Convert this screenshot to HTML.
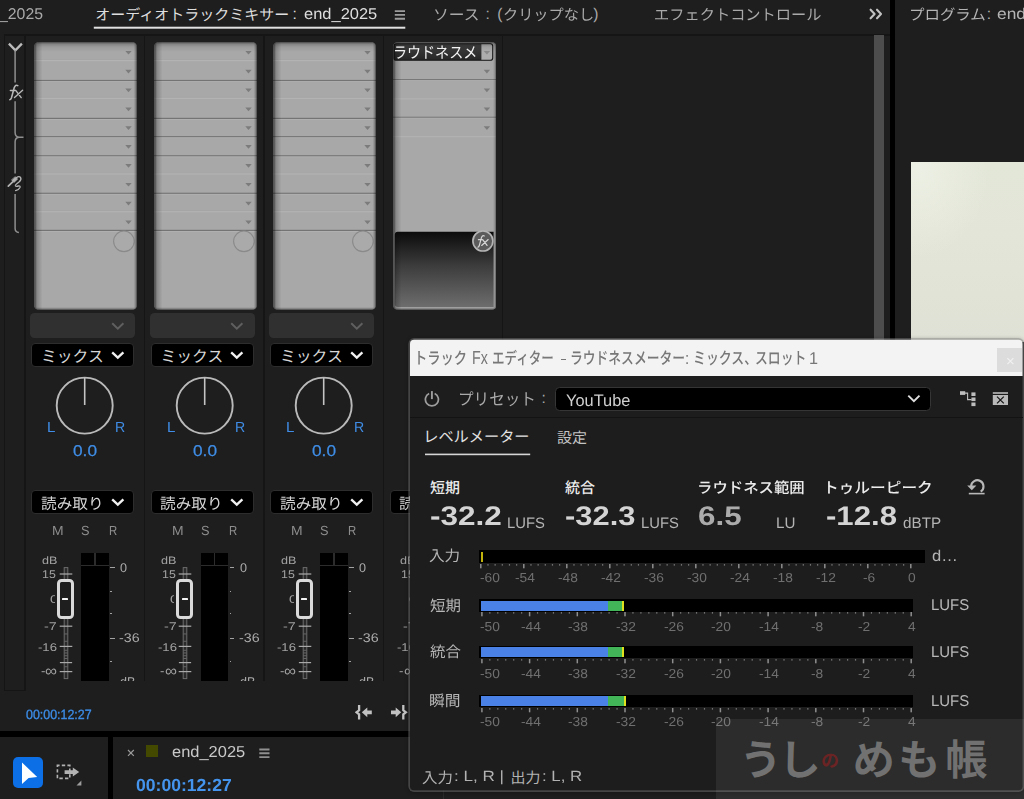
<!DOCTYPE html>
<html lang="ja"><head><meta charset="utf-8"><title>Audio Track Mixer - Loudness Meter</title>
<style>
html,body{margin:0;padding:0;overflow:hidden}
#app{position:absolute;left:0;top:0;width:1024px;height:799px;overflow:hidden}
body{width:1024px;height:799px;overflow:hidden;position:relative;background:#1e1e1e;
 font-family:"Liberation Sans","Noto Sans CJK JP",sans-serif;-webkit-font-smoothing:antialiased;text-rendering:geometricPrecision}
.a{position:absolute;box-sizing:border-box}
.t{position:absolute;white-space:nowrap;margin:0}
</style></head>
<body>
<div id="app">
<div class="t" style="left:-1.50px;top:6.99px;font-size:15.6px;line-height:15.6px;color:#a9a9a9;transform:scaleX(1.0143);transform-origin:0 0;">_2025</div>
<div class="t" style="left:95.20px;top:7.99px;font-size:15.6px;line-height:15.6px;color:#dedede;"><span style="font-size:15px">オーディオトラックミキサー</span></div>
<div class="t" style="left:292.60px;top:6.99px;font-size:15.6px;line-height:15.6px;color:#dedede;">:</div>
<div class="t" style="left:303.50px;top:6.99px;font-size:15.6px;line-height:15.6px;color:#dedede;transform:scaleX(1.0560);transform-origin:0 0;">end_2025</div>
<svg class="a" style="left:394px;top:9px;" width="12" height="12" viewBox="0 0 12 12"><path d="M0.8 2.1h10.2M0.8 5.9h10.2M0.8 9.7h10.2" stroke="#9c9c9c" stroke-width="1.9"/></svg>
<svg class="a" style="left:93px;top:26px;" width="313" height="4" viewBox="0 0 313 4"><rect x="0.8" y="0.7" width="311.5" height="2" fill="#e2e2e2"/></svg>
<div class="t" style="left:433.20px;top:7.99px;font-size:15.6px;line-height:15.6px;color:#a9a9a9;transform:scaleX(1.05);transform-origin:0 0;"><span style="font-size:15px">ソース</span></div>
<div class="t" style="left:485.40px;top:6.99px;font-size:15.6px;line-height:15.6px;color:#a9a9a9;">:</div>
<div class="t" style="left:497.20px;top:6.99px;font-size:15.6px;line-height:15.6px;color:#a9a9a9;">(</div>
<div class="t" style="left:502.80px;top:7.99px;font-size:15.6px;line-height:15.6px;color:#a9a9a9;transform:scaleX(1.012);transform-origin:0 0;"><span style="font-size:15px">クリップなし</span></div>
<div class="t" style="left:593.20px;top:6.99px;font-size:15.6px;line-height:15.6px;color:#a9a9a9;">)</div>
<div class="t" style="left:654.00px;top:7.99px;font-size:15.6px;line-height:15.6px;color:#a9a9a9;transform:scaleX(1.015);transform-origin:0 0;"><span style="font-size:15px">エフェクトコントロール</span></div>
<svg class="a" style="left:869px;top:7.7px;" width="15" height="12" viewBox="0 0 15 12"><path d="M1.6 1.7l4 4.3-4 4.3M8 1.7l4 4.3-4 4.3" fill="none" stroke="#c2c2c2" stroke-width="2.1" stroke-linecap="round" stroke-linejoin="round"/></svg>
<div class="t" style="left:909.20px;top:7.99px;font-size:15.6px;line-height:15.6px;color:#b4b4b4;transform:scaleX(1.03);transform-origin:0 0;"><span style="font-size:15px">プログラム</span></div>
<div class="t" style="left:986.80px;top:6.99px;font-size:15.6px;line-height:15.6px;color:#b4b4b4;">:</div>
<div class="t" style="left:997.20px;top:6.99px;font-size:15.6px;line-height:15.6px;color:#b4b4b4;transform:scaleX(1.1141);transform-origin:0 0;">end</div>
<div class="a" style="left:4px;top:34.2px;width:886px;height:1.4px;background:#151515;"></div>
<div class="a" style="left:4.2px;top:35px;width:1.2px;height:656px;background:#151515;"></div>
<div class="a" style="left:24.4px;top:35px;width:1.2px;height:656px;background:#151515;"></div>
<div class="a" style="left:4.2px;top:690px;width:21.4px;height:1.2px;background:#151515;"></div>
<div class="a" style="left:143.9px;top:35px;width:1.2px;height:646px;background:#151515;"></div>
<div class="a" style="left:263.4px;top:35px;width:1.2px;height:646px;background:#151515;"></div>
<div class="a" style="left:382.9px;top:35px;width:1.2px;height:646px;background:#151515;"></div>
<div class="a" style="left:502.1px;top:35px;width:1.2px;height:646px;background:#151515;"></div>
<div class="a" style="left:874.2px;top:35px;width:10px;height:305px;background:#4d4d4d;"></div>
<div class="a" style="left:889.8px;top:0px;width:5.4px;height:340px;background:#000;"></div>
<div class="a" style="left:911px;top:161.6px;width:113px;height:180px;background:radial-gradient(ellipse 70px 90px at 8px 6px,rgba(240,243,232,.75),rgba(240,243,232,0) 100%),linear-gradient(180deg,#e3e7d8 0%,#e2e4d7 60%,#e0e1d6 100%);"></div>
<div class="a" style="left:0px;top:731.2px;width:412px;height:5.4px;background:#000;"></div>
<div class="a" style="left:107.6px;top:736px;width:5.3px;height:63px;background:#000;"></div>
<div class="a" style="left:443px;top:788px;width:1.2px;height:11px;background:#2b2b2b;"></div>
<svg class="a" style="left:5px;top:40px;" width="20" height="196" viewBox="0 0 20 196"><path d="M3.9 3.6l6.5 6.7 6.5-6.7" fill="none" stroke="#bcbcbc" stroke-width="2.3" stroke-linejoin="miter"/><path d="M10.1 10.3V42.4M10.1 61.2V92.5q0 4.7 4.5 4.7H18.5M14.6 97.2q-4.5 0-4.5 4.6V133.6M10.1 154V188.5q0 3.7 3.8 3.9" fill="none" stroke="#8f8f8f" stroke-width="1.5"/><g fill="none" stroke="#b8b8b8" stroke-width="1.55" stroke-linecap="round"><path d="M12.8 45.7Q11.2 44.7 10 46.2 9.2 47.2 8.6 50L6.4 58Q5.9 59.6 4.8 59.7M5.4 50.4h4.8"/><path d="M10.7 50.4l5.5 7.2M17.6 50.2L9.5 57.6" stroke-width="1.4"/></g><g fill="none" stroke="#b4b4b4" stroke-width="1.3" stroke-linecap="round"><path d="M3.3 146.2l4.4-4.4" stroke-width="1.7"/><path d="M10.4 137l2.2 2-3.6 3.4-2.2-2.2z" fill="#b4b4b4" stroke-width=".8"/><path d="M11.6 137.6Q14 135.6 15.6 137.5 16.8 139.4 14 142 10 145 10.4 145.8 11 146.6 13.4 146 15.6 145.6 15 147.4 14 149.6 10.6 150.6"/></g></svg>
<svg class="a" style="left:34px;top:42px" width="103" height="268"><defs><clipPath id="p1c"><rect width="103" height="268" rx="5"/></clipPath><linearGradient id="p1t" x1="0" y1="0" x2="0" y2="1"><stop offset="0" stop-opacity=".58"/><stop offset=".2" stop-opacity=".22"/><stop offset=".5" stop-opacity=".08"/><stop offset="1" stop-opacity="0"/></linearGradient><linearGradient id="p1l" x1="0" y1="0" x2="1" y2="0"><stop offset="0" stop-opacity=".52"/><stop offset=".24" stop-opacity=".42"/><stop offset=".32" stop-opacity=".2"/><stop offset="1" stop-opacity="0"/></linearGradient><linearGradient id="p1r" x1="0" y1="0" x2="1" y2="0"><stop offset="0" stop-opacity="0"/><stop offset=".5" stop-opacity=".15"/><stop offset="1" stop-opacity=".58"/></linearGradient><linearGradient id="p1b" x1="0" y1="0" x2="0" y2="1"><stop offset="0" stop-opacity="0"/><stop offset=".4" stop-opacity=".1"/><stop offset="1" stop-opacity=".58"/></linearGradient></defs><g clip-path="url(#p1c)"><rect width="103" height="268" fill="#a8a8a8"/><rect x="0" y="17.10" width="103" height="1" fill="#9e9e9e" opacity=".3"/><rect x="0" y="18.00" width="103" height="1.2" fill="#b3b3b3"/><rect x="0" y="37.90" width="103" height="1.2" fill="#747474"/><rect x="0" y="39.10" width="103" height="0.9" fill="#b3b3b3" opacity=".7"/><rect x="0" y="54.90" width="103" height="1" fill="#9e9e9e" opacity=".3"/><rect x="0" y="55.80" width="103" height="1.2" fill="#b3b3b3"/><rect x="0" y="75.80" width="103" height="1.2" fill="#747474"/><rect x="0" y="77.00" width="103" height="0.9" fill="#b3b3b3" opacity=".7"/><rect x="0" y="94.10" width="103" height="1.2" fill="#747474"/><rect x="0" y="95.30" width="103" height="0.9" fill="#b3b3b3" opacity=".7"/><rect x="0" y="113.20" width="103" height="1.2" fill="#747474"/><rect x="0" y="114.40" width="103" height="0.9" fill="#b3b3b3" opacity=".7"/><rect x="0" y="130.50" width="103" height="1" fill="#9e9e9e" opacity=".3"/><rect x="0" y="131.40" width="103" height="1.2" fill="#b3b3b3"/><rect x="0" y="150.70" width="103" height="1.2" fill="#747474"/><rect x="0" y="151.90" width="103" height="0.9" fill="#b3b3b3" opacity=".7"/><rect x="0" y="168.20" width="103" height="1" fill="#9e9e9e" opacity=".3"/><rect x="0" y="169.10" width="103" height="1.2" fill="#b3b3b3"/><rect x="0" y="187.80" width="103" height="1.2" fill="#747474"/><rect x="0" y="189.00" width="103" height="0.9" fill="#b3b3b3" opacity=".7"/><path d="M91.3 8.9h6.4l-3.2 3.7z" fill="#7c7c7c"/><path d="M91.3 27.8h6.4l-3.2 3.7z" fill="#7c7c7c"/><path d="M91.3 46.6h6.4l-3.2 3.7z" fill="#7c7c7c"/><path d="M91.3 65.5h6.4l-3.2 3.7z" fill="#7c7c7c"/><path d="M91.3 84.3h6.4l-3.2 3.7z" fill="#7c7c7c"/><path d="M91.3 103.1h6.4l-3.2 3.7z" fill="#7c7c7c"/><path d="M91.3 122.0h6.4l-3.2 3.7z" fill="#7c7c7c"/><path d="M91.3 140.9h6.4l-3.2 3.7z" fill="#7c7c7c"/><path d="M91.3 159.7h6.4l-3.2 3.7z" fill="#7c7c7c"/><path d="M91.3 178.6h6.4l-3.2 3.7z" fill="#7c7c7c"/><circle cx="89.9" cy="199.3" r="10.3" fill="#aaaaaa" stroke="#8a8a8a" stroke-width="1.1"/><rect width="103" height="10" fill="url(#p1t)"/><rect width="8.5" height="268" fill="url(#p1l)"/><rect x="99.4" width="3.6" height="268" fill="url(#p1r)"/><rect y="264.8" width="103" height="3.2" fill="url(#p1b)"/></g></svg>
<div class="a" style="left:30.4px;top:313.2px;width:104.8px;height:25px;background:#303030;border-radius:4.5px;"></div>
<svg class="a" style="left:110.5px;top:321.6px;" width="14" height="9" viewBox="0 0 14 9"><path d="M1.2 1.3l5.6 5.4 5.6-5.4" fill="none" stroke="#5f5f5f" stroke-width="2"/></svg>
<div class="a" style="left:31.3px;top:342.5px;width:103px;height:24px;background:#000;border:1.1px solid #2d2d2d;border-radius:4px"></div>
<div class="t" style="left:41.00px;top:350.23px;font-size:15.8px;line-height:15.8px;color:#d6d6d6;">ミックス</div>
<svg class="a" style="left:110.5px;top:350.7px;" width="14" height="9" viewBox="0 0 14 9"><path d="M1.2 1.3l5.6 5.4 5.6-5.4" fill="none" stroke="#f2f2f2" stroke-width="2.3"/></svg>
<svg class="a" style="left:54px;top:375px;" width="62" height="62" viewBox="0 0 62 62"><circle cx="30.7" cy="30.6" r="28" fill="none" stroke="#bababa" stroke-width="1.9"/><path d="M30.7 2.6V30" stroke="#c4c4c4" stroke-width="1.6"/></svg>
<div class="t" style="left:47.00px;top:421.34px;font-size:14.6px;line-height:14.6px;color:#3f8de6;transform:scaleX(1.0345);transform-origin:0 0;">L</div>
<div class="t" style="left:115.20px;top:421.34px;font-size:14.6px;line-height:14.6px;color:#3f8de6;transform:scaleX(0.9674);transform-origin:0 0;">R</div>
<div class="t" style="left:73.20px;top:444.19px;font-size:15.6px;line-height:15.6px;color:#3f8de6;-webkit-text-stroke:.25px #3f8de6;transform:scaleX(1.1067);transform-origin:0 0;">0.0</div>
<div class="a" style="left:31.3px;top:489.6px;width:103px;height:24px;background:#000;border:1.1px solid #2d2d2d;border-radius:4px"></div>
<div class="t" style="left:40.60px;top:496.83px;font-size:15.2px;line-height:15.2px;color:#d6d6d6;transform:scaleX(1.03);transform-origin:0 0;">読み取り</div>
<svg class="a" style="left:110.5px;top:497.8px;" width="14" height="9" viewBox="0 0 14 9"><path d="M1.2 1.3l5.6 5.4 5.6-5.4" fill="none" stroke="#f2f2f2" stroke-width="2.3"/></svg>
<div class="t" style="left:52.00px;top:523.93px;font-size:13.2px;line-height:13.2px;color:#8e8e8e;transform:scaleX(1.0549);transform-origin:0 0;">M</div>
<div class="t" style="left:81.40px;top:523.93px;font-size:13.2px;line-height:13.2px;color:#8e8e8e;transform:scaleX(0.9654);transform-origin:0 0;">S</div>
<div class="t" style="left:109.40px;top:523.93px;font-size:13.2px;line-height:13.2px;color:#8e8e8e;transform:scaleX(0.8602);transform-origin:0 0;">R</div>
<div class="t" style="left:41.60px;top:556.46px;font-size:10.8px;line-height:10.8px;color:#a2a2a2;transform:scaleX(1.1657);transform-origin:0 0;">dB</div>
<div class="t" style="left:42.20px;top:569.72px;font-size:11.2px;line-height:11.2px;color:#a2a2a2;transform:scaleX(1.1077);transform-origin:0 0;">15</div>
<div class="a" style="left:45px;top:590px;width:9.7px;height:18px;overflow:hidden">
<div class="t" style="left:5.20px;top:4.52px;font-size:11.2px;line-height:11.2px;color:#a2a2a2;transform:scaleX(1.2843);transform-origin:0 0;">0</div>
</div>
<div class="t" style="left:44.20px;top:621.72px;font-size:11.2px;line-height:11.2px;color:#a2a2a2;transform:scaleX(1.2852);transform-origin:0 0;">-7</div>
<div class="t" style="left:38.20px;top:642.52px;font-size:11.2px;line-height:11.2px;color:#a2a2a2;transform:scaleX(1.1737);transform-origin:0 0;">-16</div>
<div class="t" style="left:40.80px;top:665.02px;font-size:12.5px;line-height:12.5px;color:#a2a2a2;transform:scaleX(1.0569);transform-origin:0 0;">-</div>
<div class="t" style="left:45.40px;top:664.28px;font-size:15.5px;line-height:15.5px;color:#a2a2a2;transform:scaleX(1.0860);transform-origin:0 0;">∞</div>
<svg class="a" style="left:53.6px;top:567px;" width="24" height="113" viewBox="0 0 24 113"><rect x="10.2" y="0.6" width="3.6" height="111" fill="#2a2a2a" stroke="#6d6d6d" stroke-width="1"/><rect x="10.4" y="66.5" width="3.2" height="0.9" fill="#6c6c6c"/><rect x="10.4" y="73.8" width="3.2" height="0.9" fill="#6c6c6c"/><rect x="10.4" y="82.8" width="3.2" height="0.9" fill="#6c6c6c"/><rect x="10.4" y="85.5" width="3.2" height="0.9" fill="#6c6c6c"/><rect x="10.4" y="88.3" width="3.2" height="0.9" fill="#6c6c6c"/><rect x="10.4" y="91.0" width="3.2" height="0.9" fill="#6c6c6c"/><rect x="10.4" y="99.3" width="3.2" height="0.9" fill="#6c6c6c"/><rect x="5.7" y="6.4" width="12.6" height="1.2" fill="#a9a9a9"/><rect x="5.7" y="58.6" width="12.6" height="1.2" fill="#a9a9a9"/><rect x="5.7" y="78.8" width="12.6" height="1.2" fill="#a9a9a9"/><rect x="5.9" y="95.0" width="12.2" height="1.2" fill="#a9a9a9"/><rect x="5.7" y="104.0" width="12.6" height="1.2" fill="#a9a9a9"/></svg>
<div class="a" style="left:56.9px;top:579.4px;width:16.8px;height:39.2px;border:3px solid #dadada;border-radius:4.5px;background:#1e1e1e"></div>
<div class="a" style="left:62px;top:597.7px;width:6.4px;height:2.2px;background:#f4f4f4;border-radius:.6px;"></div>
<div class="a" style="left:81.2px;top:553.2px;width:27.4px;height:128px;background:#000"><div class="a" style="left:0;top:11.4px;width:100%;height:1.1px;background:#2c2c2c"></div><div class="a" style="left:13.2px;top:0;width:1.2px;height:12px;background:#2c2c2c"></div></div>
<div class="a" style="left:110px;top:566.8px;width:4.8px;height:1px;background:#a2a2a2;"></div>
<div class="a" style="left:110px;top:637.5px;width:4.8px;height:1px;background:#a2a2a2;"></div>
<div class="a" style="left:110px;top:590.5px;width:1.8px;height:1.4px;background:#a2a2a2;"></div>
<div class="a" style="left:110px;top:613.1px;width:1.8px;height:1.4px;background:#a2a2a2;"></div>
<div class="a" style="left:110px;top:660.7px;width:1.8px;height:1.4px;background:#a2a2a2;"></div>
<div class="t" style="left:120.00px;top:561.53px;font-size:12.6px;line-height:12.6px;color:#ababab;transform:scaleX(0.9989);transform-origin:0 0;">0</div>
<div class="t" style="left:119.40px;top:631.93px;font-size:12.6px;line-height:12.6px;color:#ababab;transform:scaleX(1.1311);transform-origin:0 0;">-36</div>
<div class="t" style="left:120.00px;top:676.33px;font-size:12.6px;line-height:12.6px;color:#ababab;transform:scaleX(0.9992);transform-origin:0 0;">dB</div>
<svg class="a" style="left:153.5px;top:42px" width="103" height="268"><defs><clipPath id="p2c"><rect width="103" height="268" rx="5"/></clipPath><linearGradient id="p2t" x1="0" y1="0" x2="0" y2="1"><stop offset="0" stop-opacity=".58"/><stop offset=".2" stop-opacity=".22"/><stop offset=".5" stop-opacity=".08"/><stop offset="1" stop-opacity="0"/></linearGradient><linearGradient id="p2l" x1="0" y1="0" x2="1" y2="0"><stop offset="0" stop-opacity=".52"/><stop offset=".24" stop-opacity=".42"/><stop offset=".32" stop-opacity=".2"/><stop offset="1" stop-opacity="0"/></linearGradient><linearGradient id="p2r" x1="0" y1="0" x2="1" y2="0"><stop offset="0" stop-opacity="0"/><stop offset=".5" stop-opacity=".15"/><stop offset="1" stop-opacity=".58"/></linearGradient><linearGradient id="p2b" x1="0" y1="0" x2="0" y2="1"><stop offset="0" stop-opacity="0"/><stop offset=".4" stop-opacity=".1"/><stop offset="1" stop-opacity=".58"/></linearGradient></defs><g clip-path="url(#p2c)"><rect width="103" height="268" fill="#a8a8a8"/><rect x="0" y="17.10" width="103" height="1" fill="#9e9e9e" opacity=".3"/><rect x="0" y="18.00" width="103" height="1.2" fill="#b3b3b3"/><rect x="0" y="37.90" width="103" height="1.2" fill="#747474"/><rect x="0" y="39.10" width="103" height="0.9" fill="#b3b3b3" opacity=".7"/><rect x="0" y="54.90" width="103" height="1" fill="#9e9e9e" opacity=".3"/><rect x="0" y="55.80" width="103" height="1.2" fill="#b3b3b3"/><rect x="0" y="75.80" width="103" height="1.2" fill="#747474"/><rect x="0" y="77.00" width="103" height="0.9" fill="#b3b3b3" opacity=".7"/><rect x="0" y="94.10" width="103" height="1.2" fill="#747474"/><rect x="0" y="95.30" width="103" height="0.9" fill="#b3b3b3" opacity=".7"/><rect x="0" y="113.20" width="103" height="1.2" fill="#747474"/><rect x="0" y="114.40" width="103" height="0.9" fill="#b3b3b3" opacity=".7"/><rect x="0" y="130.50" width="103" height="1" fill="#9e9e9e" opacity=".3"/><rect x="0" y="131.40" width="103" height="1.2" fill="#b3b3b3"/><rect x="0" y="150.70" width="103" height="1.2" fill="#747474"/><rect x="0" y="151.90" width="103" height="0.9" fill="#b3b3b3" opacity=".7"/><rect x="0" y="168.20" width="103" height="1" fill="#9e9e9e" opacity=".3"/><rect x="0" y="169.10" width="103" height="1.2" fill="#b3b3b3"/><rect x="0" y="187.80" width="103" height="1.2" fill="#747474"/><rect x="0" y="189.00" width="103" height="0.9" fill="#b3b3b3" opacity=".7"/><path d="M91.3 8.9h6.4l-3.2 3.7z" fill="#7c7c7c"/><path d="M91.3 27.8h6.4l-3.2 3.7z" fill="#7c7c7c"/><path d="M91.3 46.6h6.4l-3.2 3.7z" fill="#7c7c7c"/><path d="M91.3 65.5h6.4l-3.2 3.7z" fill="#7c7c7c"/><path d="M91.3 84.3h6.4l-3.2 3.7z" fill="#7c7c7c"/><path d="M91.3 103.1h6.4l-3.2 3.7z" fill="#7c7c7c"/><path d="M91.3 122.0h6.4l-3.2 3.7z" fill="#7c7c7c"/><path d="M91.3 140.9h6.4l-3.2 3.7z" fill="#7c7c7c"/><path d="M91.3 159.7h6.4l-3.2 3.7z" fill="#7c7c7c"/><path d="M91.3 178.6h6.4l-3.2 3.7z" fill="#7c7c7c"/><circle cx="89.9" cy="199.3" r="10.3" fill="#aaaaaa" stroke="#8a8a8a" stroke-width="1.1"/><rect width="103" height="10" fill="url(#p2t)"/><rect width="8.5" height="268" fill="url(#p2l)"/><rect x="99.4" width="3.6" height="268" fill="url(#p2r)"/><rect y="264.8" width="103" height="3.2" fill="url(#p2b)"/></g></svg>
<div class="a" style="left:149.9px;top:313.2px;width:104.8px;height:25px;background:#303030;border-radius:4.5px;"></div>
<svg class="a" style="left:230px;top:321.6px;" width="14" height="9" viewBox="0 0 14 9"><path d="M1.2 1.3l5.6 5.4 5.6-5.4" fill="none" stroke="#5f5f5f" stroke-width="2"/></svg>
<div class="a" style="left:150.8px;top:342.5px;width:103px;height:24px;background:#000;border:1.1px solid #2d2d2d;border-radius:4px"></div>
<div class="t" style="left:160.50px;top:350.23px;font-size:15.8px;line-height:15.8px;color:#d6d6d6;">ミックス</div>
<svg class="a" style="left:230px;top:350.7px;" width="14" height="9" viewBox="0 0 14 9"><path d="M1.2 1.3l5.6 5.4 5.6-5.4" fill="none" stroke="#f2f2f2" stroke-width="2.3"/></svg>
<svg class="a" style="left:173.5px;top:375px;" width="62" height="62" viewBox="0 0 62 62"><circle cx="30.7" cy="30.6" r="28" fill="none" stroke="#bababa" stroke-width="1.9"/><path d="M30.7 2.6V30" stroke="#c4c4c4" stroke-width="1.6"/></svg>
<div class="t" style="left:166.50px;top:421.34px;font-size:14.6px;line-height:14.6px;color:#3f8de6;transform:scaleX(1.0345);transform-origin:0 0;">L</div>
<div class="t" style="left:234.70px;top:421.34px;font-size:14.6px;line-height:14.6px;color:#3f8de6;transform:scaleX(0.9674);transform-origin:0 0;">R</div>
<div class="t" style="left:192.70px;top:444.19px;font-size:15.6px;line-height:15.6px;color:#3f8de6;-webkit-text-stroke:.25px #3f8de6;transform:scaleX(1.1067);transform-origin:0 0;">0.0</div>
<div class="a" style="left:150.8px;top:489.6px;width:103px;height:24px;background:#000;border:1.1px solid #2d2d2d;border-radius:4px"></div>
<div class="t" style="left:160.10px;top:496.83px;font-size:15.2px;line-height:15.2px;color:#d6d6d6;transform:scaleX(1.03);transform-origin:0 0;">読み取り</div>
<svg class="a" style="left:230px;top:497.8px;" width="14" height="9" viewBox="0 0 14 9"><path d="M1.2 1.3l5.6 5.4 5.6-5.4" fill="none" stroke="#f2f2f2" stroke-width="2.3"/></svg>
<div class="t" style="left:171.50px;top:523.93px;font-size:13.2px;line-height:13.2px;color:#8e8e8e;transform:scaleX(1.0549);transform-origin:0 0;">M</div>
<div class="t" style="left:200.90px;top:523.93px;font-size:13.2px;line-height:13.2px;color:#8e8e8e;transform:scaleX(0.9654);transform-origin:0 0;">S</div>
<div class="t" style="left:228.90px;top:523.93px;font-size:13.2px;line-height:13.2px;color:#8e8e8e;transform:scaleX(0.8602);transform-origin:0 0;">R</div>
<div class="t" style="left:161.10px;top:556.46px;font-size:10.8px;line-height:10.8px;color:#a2a2a2;transform:scaleX(1.1657);transform-origin:0 0;">dB</div>
<div class="t" style="left:161.70px;top:569.72px;font-size:11.2px;line-height:11.2px;color:#a2a2a2;transform:scaleX(1.1077);transform-origin:0 0;">15</div>
<div class="a" style="left:164.5px;top:590px;width:9.7px;height:18px;overflow:hidden">
<div class="t" style="left:5.20px;top:4.52px;font-size:11.2px;line-height:11.2px;color:#a2a2a2;transform:scaleX(1.2843);transform-origin:0 0;">0</div>
</div>
<div class="t" style="left:163.70px;top:621.72px;font-size:11.2px;line-height:11.2px;color:#a2a2a2;transform:scaleX(1.2852);transform-origin:0 0;">-7</div>
<div class="t" style="left:157.70px;top:642.52px;font-size:11.2px;line-height:11.2px;color:#a2a2a2;transform:scaleX(1.1737);transform-origin:0 0;">-16</div>
<div class="t" style="left:160.30px;top:665.02px;font-size:12.5px;line-height:12.5px;color:#a2a2a2;transform:scaleX(1.0569);transform-origin:0 0;">-</div>
<div class="t" style="left:164.90px;top:664.28px;font-size:15.5px;line-height:15.5px;color:#a2a2a2;transform:scaleX(1.0860);transform-origin:0 0;">∞</div>
<svg class="a" style="left:173.1px;top:567px;" width="24" height="113" viewBox="0 0 24 113"><rect x="10.2" y="0.6" width="3.6" height="111" fill="#2a2a2a" stroke="#6d6d6d" stroke-width="1"/><rect x="10.4" y="66.5" width="3.2" height="0.9" fill="#6c6c6c"/><rect x="10.4" y="73.8" width="3.2" height="0.9" fill="#6c6c6c"/><rect x="10.4" y="82.8" width="3.2" height="0.9" fill="#6c6c6c"/><rect x="10.4" y="85.5" width="3.2" height="0.9" fill="#6c6c6c"/><rect x="10.4" y="88.3" width="3.2" height="0.9" fill="#6c6c6c"/><rect x="10.4" y="91.0" width="3.2" height="0.9" fill="#6c6c6c"/><rect x="10.4" y="99.3" width="3.2" height="0.9" fill="#6c6c6c"/><rect x="5.7" y="6.4" width="12.6" height="1.2" fill="#a9a9a9"/><rect x="5.7" y="58.6" width="12.6" height="1.2" fill="#a9a9a9"/><rect x="5.7" y="78.8" width="12.6" height="1.2" fill="#a9a9a9"/><rect x="5.9" y="95.0" width="12.2" height="1.2" fill="#a9a9a9"/><rect x="5.7" y="104.0" width="12.6" height="1.2" fill="#a9a9a9"/></svg>
<div class="a" style="left:176.4px;top:579.4px;width:16.8px;height:39.2px;border:3px solid #dadada;border-radius:4.5px;background:#1e1e1e"></div>
<div class="a" style="left:181.5px;top:597.7px;width:6.4px;height:2.2px;background:#f4f4f4;border-radius:.6px;"></div>
<div class="a" style="left:200.7px;top:553.2px;width:27.4px;height:128px;background:#000"><div class="a" style="left:0;top:11.4px;width:100%;height:1.1px;background:#2c2c2c"></div><div class="a" style="left:13.2px;top:0;width:1.2px;height:12px;background:#2c2c2c"></div></div>
<div class="a" style="left:229.5px;top:566.8px;width:4.8px;height:1px;background:#a2a2a2;"></div>
<div class="a" style="left:229.5px;top:637.5px;width:4.8px;height:1px;background:#a2a2a2;"></div>
<div class="a" style="left:229.5px;top:590.5px;width:1.8px;height:1.4px;background:#a2a2a2;"></div>
<div class="a" style="left:229.5px;top:613.1px;width:1.8px;height:1.4px;background:#a2a2a2;"></div>
<div class="a" style="left:229.5px;top:660.7px;width:1.8px;height:1.4px;background:#a2a2a2;"></div>
<div class="t" style="left:239.50px;top:561.53px;font-size:12.6px;line-height:12.6px;color:#ababab;transform:scaleX(0.9989);transform-origin:0 0;">0</div>
<div class="t" style="left:238.90px;top:631.93px;font-size:12.6px;line-height:12.6px;color:#ababab;transform:scaleX(1.1311);transform-origin:0 0;">-36</div>
<div class="t" style="left:239.50px;top:676.33px;font-size:12.6px;line-height:12.6px;color:#ababab;transform:scaleX(0.9992);transform-origin:0 0;">dB</div>
<svg class="a" style="left:273px;top:42px" width="103" height="268"><defs><clipPath id="p3c"><rect width="103" height="268" rx="5"/></clipPath><linearGradient id="p3t" x1="0" y1="0" x2="0" y2="1"><stop offset="0" stop-opacity=".58"/><stop offset=".2" stop-opacity=".22"/><stop offset=".5" stop-opacity=".08"/><stop offset="1" stop-opacity="0"/></linearGradient><linearGradient id="p3l" x1="0" y1="0" x2="1" y2="0"><stop offset="0" stop-opacity=".52"/><stop offset=".24" stop-opacity=".42"/><stop offset=".32" stop-opacity=".2"/><stop offset="1" stop-opacity="0"/></linearGradient><linearGradient id="p3r" x1="0" y1="0" x2="1" y2="0"><stop offset="0" stop-opacity="0"/><stop offset=".5" stop-opacity=".15"/><stop offset="1" stop-opacity=".58"/></linearGradient><linearGradient id="p3b" x1="0" y1="0" x2="0" y2="1"><stop offset="0" stop-opacity="0"/><stop offset=".4" stop-opacity=".1"/><stop offset="1" stop-opacity=".58"/></linearGradient></defs><g clip-path="url(#p3c)"><rect width="103" height="268" fill="#a8a8a8"/><rect x="0" y="17.10" width="103" height="1" fill="#9e9e9e" opacity=".3"/><rect x="0" y="18.00" width="103" height="1.2" fill="#b3b3b3"/><rect x="0" y="37.90" width="103" height="1.2" fill="#747474"/><rect x="0" y="39.10" width="103" height="0.9" fill="#b3b3b3" opacity=".7"/><rect x="0" y="54.90" width="103" height="1" fill="#9e9e9e" opacity=".3"/><rect x="0" y="55.80" width="103" height="1.2" fill="#b3b3b3"/><rect x="0" y="75.80" width="103" height="1.2" fill="#747474"/><rect x="0" y="77.00" width="103" height="0.9" fill="#b3b3b3" opacity=".7"/><rect x="0" y="94.10" width="103" height="1.2" fill="#747474"/><rect x="0" y="95.30" width="103" height="0.9" fill="#b3b3b3" opacity=".7"/><rect x="0" y="113.20" width="103" height="1.2" fill="#747474"/><rect x="0" y="114.40" width="103" height="0.9" fill="#b3b3b3" opacity=".7"/><rect x="0" y="130.50" width="103" height="1" fill="#9e9e9e" opacity=".3"/><rect x="0" y="131.40" width="103" height="1.2" fill="#b3b3b3"/><rect x="0" y="150.70" width="103" height="1.2" fill="#747474"/><rect x="0" y="151.90" width="103" height="0.9" fill="#b3b3b3" opacity=".7"/><rect x="0" y="168.20" width="103" height="1" fill="#9e9e9e" opacity=".3"/><rect x="0" y="169.10" width="103" height="1.2" fill="#b3b3b3"/><rect x="0" y="187.80" width="103" height="1.2" fill="#747474"/><rect x="0" y="189.00" width="103" height="0.9" fill="#b3b3b3" opacity=".7"/><path d="M91.3 8.9h6.4l-3.2 3.7z" fill="#7c7c7c"/><path d="M91.3 27.8h6.4l-3.2 3.7z" fill="#7c7c7c"/><path d="M91.3 46.6h6.4l-3.2 3.7z" fill="#7c7c7c"/><path d="M91.3 65.5h6.4l-3.2 3.7z" fill="#7c7c7c"/><path d="M91.3 84.3h6.4l-3.2 3.7z" fill="#7c7c7c"/><path d="M91.3 103.1h6.4l-3.2 3.7z" fill="#7c7c7c"/><path d="M91.3 122.0h6.4l-3.2 3.7z" fill="#7c7c7c"/><path d="M91.3 140.9h6.4l-3.2 3.7z" fill="#7c7c7c"/><path d="M91.3 159.7h6.4l-3.2 3.7z" fill="#7c7c7c"/><path d="M91.3 178.6h6.4l-3.2 3.7z" fill="#7c7c7c"/><circle cx="89.9" cy="199.3" r="10.3" fill="#aaaaaa" stroke="#8a8a8a" stroke-width="1.1"/><rect width="103" height="10" fill="url(#p3t)"/><rect width="8.5" height="268" fill="url(#p3l)"/><rect x="99.4" width="3.6" height="268" fill="url(#p3r)"/><rect y="264.8" width="103" height="3.2" fill="url(#p3b)"/></g></svg>
<div class="a" style="left:269.4px;top:313.2px;width:104.8px;height:25px;background:#303030;border-radius:4.5px;"></div>
<svg class="a" style="left:349.5px;top:321.6px;" width="14" height="9" viewBox="0 0 14 9"><path d="M1.2 1.3l5.6 5.4 5.6-5.4" fill="none" stroke="#5f5f5f" stroke-width="2"/></svg>
<div class="a" style="left:270.3px;top:342.5px;width:103px;height:24px;background:#000;border:1.1px solid #2d2d2d;border-radius:4px"></div>
<div class="t" style="left:280.00px;top:350.23px;font-size:15.8px;line-height:15.8px;color:#d6d6d6;">ミックス</div>
<svg class="a" style="left:349.5px;top:350.7px;" width="14" height="9" viewBox="0 0 14 9"><path d="M1.2 1.3l5.6 5.4 5.6-5.4" fill="none" stroke="#f2f2f2" stroke-width="2.3"/></svg>
<svg class="a" style="left:293px;top:375px;" width="62" height="62" viewBox="0 0 62 62"><circle cx="30.7" cy="30.6" r="28" fill="none" stroke="#bababa" stroke-width="1.9"/><path d="M30.7 2.6V30" stroke="#c4c4c4" stroke-width="1.6"/></svg>
<div class="t" style="left:286.00px;top:421.34px;font-size:14.6px;line-height:14.6px;color:#3f8de6;transform:scaleX(1.0345);transform-origin:0 0;">L</div>
<div class="t" style="left:354.20px;top:421.34px;font-size:14.6px;line-height:14.6px;color:#3f8de6;transform:scaleX(0.9674);transform-origin:0 0;">R</div>
<div class="t" style="left:312.20px;top:444.19px;font-size:15.6px;line-height:15.6px;color:#3f8de6;-webkit-text-stroke:.25px #3f8de6;transform:scaleX(1.1067);transform-origin:0 0;">0.0</div>
<div class="a" style="left:270.3px;top:489.6px;width:103px;height:24px;background:#000;border:1.1px solid #2d2d2d;border-radius:4px"></div>
<div class="t" style="left:279.60px;top:496.83px;font-size:15.2px;line-height:15.2px;color:#d6d6d6;transform:scaleX(1.03);transform-origin:0 0;">読み取り</div>
<svg class="a" style="left:349.5px;top:497.8px;" width="14" height="9" viewBox="0 0 14 9"><path d="M1.2 1.3l5.6 5.4 5.6-5.4" fill="none" stroke="#f2f2f2" stroke-width="2.3"/></svg>
<div class="t" style="left:291.00px;top:523.93px;font-size:13.2px;line-height:13.2px;color:#8e8e8e;transform:scaleX(1.0549);transform-origin:0 0;">M</div>
<div class="t" style="left:320.40px;top:523.93px;font-size:13.2px;line-height:13.2px;color:#8e8e8e;transform:scaleX(0.9654);transform-origin:0 0;">S</div>
<div class="t" style="left:348.40px;top:523.93px;font-size:13.2px;line-height:13.2px;color:#8e8e8e;transform:scaleX(0.8602);transform-origin:0 0;">R</div>
<div class="t" style="left:280.60px;top:556.46px;font-size:10.8px;line-height:10.8px;color:#a2a2a2;transform:scaleX(1.1657);transform-origin:0 0;">dB</div>
<div class="t" style="left:281.20px;top:569.72px;font-size:11.2px;line-height:11.2px;color:#a2a2a2;transform:scaleX(1.1077);transform-origin:0 0;">15</div>
<div class="a" style="left:284px;top:590px;width:9.7px;height:18px;overflow:hidden">
<div class="t" style="left:5.20px;top:4.52px;font-size:11.2px;line-height:11.2px;color:#a2a2a2;transform:scaleX(1.2843);transform-origin:0 0;">0</div>
</div>
<div class="t" style="left:283.20px;top:621.72px;font-size:11.2px;line-height:11.2px;color:#a2a2a2;transform:scaleX(1.2852);transform-origin:0 0;">-7</div>
<div class="t" style="left:277.20px;top:642.52px;font-size:11.2px;line-height:11.2px;color:#a2a2a2;transform:scaleX(1.1737);transform-origin:0 0;">-16</div>
<div class="t" style="left:279.80px;top:665.02px;font-size:12.5px;line-height:12.5px;color:#a2a2a2;transform:scaleX(1.0569);transform-origin:0 0;">-</div>
<div class="t" style="left:284.40px;top:664.28px;font-size:15.5px;line-height:15.5px;color:#a2a2a2;transform:scaleX(1.0860);transform-origin:0 0;">∞</div>
<svg class="a" style="left:292.6px;top:567px;" width="24" height="113" viewBox="0 0 24 113"><rect x="10.2" y="0.6" width="3.6" height="111" fill="#2a2a2a" stroke="#6d6d6d" stroke-width="1"/><rect x="10.4" y="66.5" width="3.2" height="0.9" fill="#6c6c6c"/><rect x="10.4" y="73.8" width="3.2" height="0.9" fill="#6c6c6c"/><rect x="10.4" y="82.8" width="3.2" height="0.9" fill="#6c6c6c"/><rect x="10.4" y="85.5" width="3.2" height="0.9" fill="#6c6c6c"/><rect x="10.4" y="88.3" width="3.2" height="0.9" fill="#6c6c6c"/><rect x="10.4" y="91.0" width="3.2" height="0.9" fill="#6c6c6c"/><rect x="10.4" y="99.3" width="3.2" height="0.9" fill="#6c6c6c"/><rect x="5.7" y="6.4" width="12.6" height="1.2" fill="#a9a9a9"/><rect x="5.7" y="58.6" width="12.6" height="1.2" fill="#a9a9a9"/><rect x="5.7" y="78.8" width="12.6" height="1.2" fill="#a9a9a9"/><rect x="5.9" y="95.0" width="12.2" height="1.2" fill="#a9a9a9"/><rect x="5.7" y="104.0" width="12.6" height="1.2" fill="#a9a9a9"/></svg>
<div class="a" style="left:295.9px;top:579.4px;width:16.8px;height:39.2px;border:3px solid #dadada;border-radius:4.5px;background:#1e1e1e"></div>
<div class="a" style="left:301px;top:597.7px;width:6.4px;height:2.2px;background:#f4f4f4;border-radius:.6px;"></div>
<div class="a" style="left:320.2px;top:553.2px;width:27.4px;height:128px;background:#000"><div class="a" style="left:0;top:11.4px;width:100%;height:1.1px;background:#2c2c2c"></div><div class="a" style="left:13.2px;top:0;width:1.2px;height:12px;background:#2c2c2c"></div></div>
<div class="a" style="left:349px;top:566.8px;width:4.8px;height:1px;background:#a2a2a2;"></div>
<div class="a" style="left:349px;top:637.5px;width:4.8px;height:1px;background:#a2a2a2;"></div>
<div class="a" style="left:349px;top:590.5px;width:1.8px;height:1.4px;background:#a2a2a2;"></div>
<div class="a" style="left:349px;top:613.1px;width:1.8px;height:1.4px;background:#a2a2a2;"></div>
<div class="a" style="left:349px;top:660.7px;width:1.8px;height:1.4px;background:#a2a2a2;"></div>
<div class="t" style="left:359.00px;top:561.53px;font-size:12.6px;line-height:12.6px;color:#ababab;transform:scaleX(0.9989);transform-origin:0 0;">0</div>
<div class="t" style="left:358.40px;top:631.93px;font-size:12.6px;line-height:12.6px;color:#ababab;transform:scaleX(1.1311);transform-origin:0 0;">-36</div>
<div class="t" style="left:359.00px;top:676.33px;font-size:12.6px;line-height:12.6px;color:#ababab;transform:scaleX(0.9992);transform-origin:0 0;">dB</div>
<svg class="a" style="left:392.6px;top:42px" width="103.6" height="268"><defs><clipPath id="p4c"><rect width="103.6" height="268" rx="5"/></clipPath><linearGradient id="p4t" x1="0" y1="0" x2="0" y2="1"><stop offset="0" stop-opacity=".58"/><stop offset=".2" stop-opacity=".22"/><stop offset=".5" stop-opacity=".08"/><stop offset="1" stop-opacity="0"/></linearGradient><linearGradient id="p4l" x1="0" y1="0" x2="1" y2="0"><stop offset="0" stop-opacity=".52"/><stop offset=".24" stop-opacity=".42"/><stop offset=".32" stop-opacity=".2"/><stop offset="1" stop-opacity="0"/></linearGradient><linearGradient id="p4r" x1="0" y1="0" x2="1" y2="0"><stop offset="0" stop-opacity="0"/><stop offset=".5" stop-opacity=".15"/><stop offset="1" stop-opacity=".58"/></linearGradient><linearGradient id="p4b" x1="0" y1="0" x2="0" y2="1"><stop offset="0" stop-opacity="0"/><stop offset=".4" stop-opacity=".1"/><stop offset="1" stop-opacity=".58"/></linearGradient></defs><g clip-path="url(#p4c)"><rect width="103.6" height="268" fill="#a8a8a8"/><rect x="0" y="37.00" width="103.6" height="1.1" fill="#787878"/><rect x="0" y="38.10" width="103.6" height="0.9" fill="#b3b3b3" opacity=".6"/><rect x="0" y="56.35" width="103.6" height="1.1" fill="#b2b2b2"/><rect x="0" y="74.70" width="103.6" height="1.1" fill="#787878"/><rect x="0" y="75.80" width="103.6" height="0.9" fill="#b3b3b3" opacity=".6"/><rect x="0" y="94.05" width="103.6" height="1.1" fill="#b2b2b2"/><path d="M90.7 27.8h6.4l-3.2 3.7z" fill="#7c7c7c"/><path d="M90.7 46.6h6.4l-3.2 3.7z" fill="#7c7c7c"/><path d="M90.7 65.5h6.4l-3.2 3.7z" fill="#7c7c7c"/><path d="M90.7 84.3h6.4l-3.2 3.7z" fill="#7c7c7c"/><defs><linearGradient id="well" x1="0" y1="0" x2="0" y2="1"><stop offset="0" stop-color="#0b0b0b"/><stop offset=".45" stop-color="#3c3c3c"/><stop offset="1" stop-color="#6d6d6d"/></linearGradient></defs><path d="M1.8 192.7q0-3 3-3H100.6V265H4.8q-3 0-3-3z" fill="url(#well)"/><defs><linearGradient id="fxn" x1="0" y1="0" x2="0" y2="1"><stop offset="0" stop-color="#414141"/><stop offset="1" stop-color="#262626"/></linearGradient></defs><rect x="1" y="1.7" width="98.7" height="16.6" rx="2.4" fill="url(#fxn)" stroke="#1b1b1b" stroke-width="1.1"/><path d="M88.4 2.3h8.9q1.8 0 1.8 1.8v11.8q0 1.8-1.8 1.8h-8.9z" fill="#adadad"/><path d="M90.7 8.9h6.4l-3.2 3.7z" fill="#8a8a8a"/><circle cx="89.9" cy="199" r="10" fill="#5b5b5b" stroke="#b5b5b5" stroke-width="1.7"/><g transform="translate(81.1 157.4) scale(.8)" fill="none" stroke="#d6d6d6" stroke-width="1.5" stroke-linecap="round"><path d="M12.8 45.7Q11.2 44.7 10 46.2 9.2 47.2 8.6 50L6.4 58Q5.9 59.6 4.8 59.7M5.4 50.4h4.8"/><path d="M10.7 50.4l5.5 7.2M17.6 50.2L9.5 57.6"/></g><rect width="103.6" height="10" fill="url(#p4t)"/><rect width="8.5" height="268" fill="url(#p4l)"/><rect x="100" width="3.6" height="268" fill="url(#p4r)"/><rect y="264.8" width="103.6" height="3.2" fill="url(#p4b)"/></g></svg>
<div class="t" style="left:393.40px;top:46.39px;font-size:15.6px;line-height:15.6px;color:#f4f4f4;transform:scaleX(0.9);transform-origin:0 0;">ラウドネスメ</div>
<div class="a" style="left:389.8px;top:489.6px;width:103px;height:24px;background:#000;border:1.1px solid #2d2d2d;border-radius:4px"></div>
<div class="t" style="left:399.10px;top:496.83px;font-size:15.2px;line-height:15.2px;color:#d6d6d6;transform:scaleX(1.03);transform-origin:0 0;">読み取り</div>
<svg class="a" style="left:469px;top:497.8px;" width="14" height="9" viewBox="0 0 14 9"><path d="M1.2 1.3l5.6 5.4 5.6-5.4" fill="none" stroke="#f2f2f2" stroke-width="2.3"/></svg>
<div class="t" style="left:400.10px;top:556.46px;font-size:10.8px;line-height:10.8px;color:#a2a2a2;transform:scaleX(1.1657);transform-origin:0 0;">dB</div>
<div class="t" style="left:400.70px;top:569.72px;font-size:11.2px;line-height:11.2px;color:#a2a2a2;transform:scaleX(1.1077);transform-origin:0 0;">15</div>
<div class="a" style="left:403.5px;top:590px;width:9.7px;height:18px;overflow:hidden">
<div class="t" style="left:5.20px;top:4.52px;font-size:11.2px;line-height:11.2px;color:#a2a2a2;transform:scaleX(1.2843);transform-origin:0 0;">0</div>
</div>
<div class="t" style="left:402.70px;top:621.72px;font-size:11.2px;line-height:11.2px;color:#a2a2a2;transform:scaleX(1.2852);transform-origin:0 0;">-7</div>
<div class="t" style="left:396.70px;top:642.52px;font-size:11.2px;line-height:11.2px;color:#a2a2a2;transform:scaleX(1.1737);transform-origin:0 0;">-16</div>
<div class="t" style="left:399.30px;top:665.02px;font-size:12.5px;line-height:12.5px;color:#a2a2a2;transform:scaleX(1.0569);transform-origin:0 0;">-</div>
<div class="t" style="left:403.90px;top:664.28px;font-size:15.5px;line-height:15.5px;color:#a2a2a2;transform:scaleX(1.0860);transform-origin:0 0;">∞</div>
<svg class="a" style="left:412.1px;top:567px;" width="24" height="113" viewBox="0 0 24 113"><rect x="10.2" y="0.6" width="3.6" height="111" fill="#2a2a2a" stroke="#6d6d6d" stroke-width="1"/><rect x="10.4" y="66.5" width="3.2" height="0.9" fill="#6c6c6c"/><rect x="10.4" y="73.8" width="3.2" height="0.9" fill="#6c6c6c"/><rect x="10.4" y="82.8" width="3.2" height="0.9" fill="#6c6c6c"/><rect x="10.4" y="85.5" width="3.2" height="0.9" fill="#6c6c6c"/><rect x="10.4" y="88.3" width="3.2" height="0.9" fill="#6c6c6c"/><rect x="10.4" y="91.0" width="3.2" height="0.9" fill="#6c6c6c"/><rect x="10.4" y="99.3" width="3.2" height="0.9" fill="#6c6c6c"/><rect x="5.7" y="6.4" width="12.6" height="1.2" fill="#a9a9a9"/><rect x="5.7" y="58.6" width="12.6" height="1.2" fill="#a9a9a9"/><rect x="5.7" y="78.8" width="12.6" height="1.2" fill="#a9a9a9"/><rect x="5.9" y="95.0" width="12.2" height="1.2" fill="#a9a9a9"/><rect x="5.7" y="104.0" width="12.6" height="1.2" fill="#a9a9a9"/></svg>
<div class="a" style="left:415.4px;top:579.4px;width:16.8px;height:39.2px;border:3px solid #dadada;border-radius:4.5px;background:#1e1e1e"></div>
<div class="a" style="left:420.5px;top:597.7px;width:6.4px;height:2.2px;background:#f4f4f4;border-radius:.6px;"></div>
<div class="a" style="left:439.7px;top:553.2px;width:27.4px;height:128px;background:#000"><div class="a" style="left:0;top:11.4px;width:100%;height:1.1px;background:#2c2c2c"></div><div class="a" style="left:13.2px;top:0;width:1.2px;height:12px;background:#2c2c2c"></div></div>
<div class="a" style="left:468.5px;top:566.8px;width:4.8px;height:1px;background:#a2a2a2;"></div>
<div class="a" style="left:468.5px;top:637.5px;width:4.8px;height:1px;background:#a2a2a2;"></div>
<div class="a" style="left:468.5px;top:590.5px;width:1.8px;height:1.4px;background:#a2a2a2;"></div>
<div class="a" style="left:468.5px;top:613.1px;width:1.8px;height:1.4px;background:#a2a2a2;"></div>
<div class="a" style="left:468.5px;top:660.7px;width:1.8px;height:1.4px;background:#a2a2a2;"></div>
<div class="t" style="left:478.50px;top:561.53px;font-size:12.6px;line-height:12.6px;color:#ababab;transform:scaleX(0.9989);transform-origin:0 0;">0</div>
<div class="t" style="left:477.90px;top:631.93px;font-size:12.6px;line-height:12.6px;color:#ababab;transform:scaleX(1.1311);transform-origin:0 0;">-36</div>
<div class="t" style="left:478.50px;top:676.33px;font-size:12.6px;line-height:12.6px;color:#ababab;transform:scaleX(0.9992);transform-origin:0 0;">dB</div>
<div class="a" style="left:25.6px;top:680.8px;width:477.5px;height:9.2px;background:#1e1e1e;"></div>
<div class="a" style="left:25.6px;top:690px;width:477.5px;height:41px;background:#1e1e1e;"></div>
<div class="t" style="left:25.80px;top:708.06px;font-size:13.4px;line-height:13.4px;color:#3c8ce6;-webkit-text-stroke:.35px #3c8ce6;transform:scaleX(0.9267);transform-origin:0 0;">00:00:12:27</div>
<svg class="a" style="left:355px;top:704px;" width="18" height="17" viewBox="0 0 18 17"><path d="M4.1 1v5.3L1.5 8.3l2.6 2v5.3" fill="none" stroke="#c2c2c2" stroke-width="2.3" stroke-linejoin="miter"/><path d="M6.8 8.3l5.5-4.9v3h4.5v3.9h-4.5v2.9z" fill="#c2c2c2"/></svg>
<svg class="a" style="left:390px;top:704px;" width="18" height="17" viewBox="0 0 18 17"><path d="M13.3 1v5.3l2.6 2-2.6 2v5.3" fill="none" stroke="#c2c2c2" stroke-width="2.3" stroke-linejoin="miter"/><path d="M11.2 8.3L5.7 3.4v3H1v3.9h4.7v2.9z" fill="#c2c2c2"/></svg>
<svg class="a" style="left:400px;top:330px;" width="624" height="469" viewBox="0 0 624 469"><defs><filter id="dsh" x="-5%" y="-5%" width="110%" height="110%"><feGaussianBlur stdDeviation="2.2"/></filter></defs><rect x="8.3" y="9.1" width="616" height="453.8" rx="6" fill="#000" opacity=".28" filter="url(#dsh)"/><rect x="8.3" y="8.1" width="616" height="453.8" rx="5.8" fill="#868686" fill-opacity=".42"/><path d="M10 45.9H622.5V456.2q0 4-4 4H14q-4 0-4-4z" fill="#1d1d1d"/><path d="M10 46V14q0-4.2 4.2-4.2H618.3q4.2 0 4.2 4.2V46z" fill="#f3f3f3"/></svg>
<div class="a" style="left:997px;top:347.8px;width:25.2px;height:24.6px;background:#dcdcdc;"></div>
<svg class="a" style="left:1005px;top:355.5px;" width="11" height="11" viewBox="0 0 11 11"><path d="M2.4 2.2l6 6M8.4 2.2l-6 6" stroke="#f1f1f1" stroke-width="1.15"/></svg>
<div class="t" style="left:413.80px;top:350.55px;font-size:16.6px;line-height:16.6px;color:#777777;font-weight:500;transform:scaleX(0.8);transform-origin:0 0;">トラック</div>
<div class="t" style="left:471.60px;top:348.52px;font-size:19px;line-height:19px;color:#777777;transform:scaleX(0.7486);transform-origin:0 0;">Fx</div>
<div class="t" style="left:492.40px;top:350.55px;font-size:16.6px;line-height:16.6px;color:#777777;font-weight:500;transform:scaleX(0.754);transform-origin:0 0;">エディター</div>
<div class="a" style="left:561px;top:359.2px;width:4.8px;height:1.3px;background:#777777;"></div>
<div class="t" style="left:570.00px;top:350.55px;font-size:16.6px;line-height:16.6px;color:#777777;font-weight:500;transform:scaleX(0.77);transform-origin:0 0;">ラウドネスメーター</div>
<div class="t" style="left:684.60px;top:350.21px;font-size:17px;line-height:17px;color:#777777;transform:scaleX(0.8893);transform-origin:0 0;">:</div>
<div class="t" style="left:692.60px;top:350.55px;font-size:16.6px;line-height:16.6px;color:#777777;font-weight:500;transform:scaleX(0.778);transform-origin:0 0;">ミックス、</div>
<div class="t" style="left:754.60px;top:350.55px;font-size:16.6px;line-height:16.6px;color:#777777;font-weight:500;transform:scaleX(0.773);transform-origin:0 0;">スロット</div>
<div class="t" style="left:809.20px;top:350.21px;font-size:17px;line-height:17px;color:#777777;transform:scaleX(0.9519);transform-origin:0 0;">1</div>
<svg class="a" style="left:424px;top:391px;" width="17" height="17" viewBox="0 0 17 17"><path d="M10.65 2.5A6.5 6.5 0 1 1 5.15 2.5" fill="none" stroke="#9d9d9d" stroke-width="1.75"/><path d="M7.9 0.1V8.1" stroke="#9d9d9d" stroke-width="1.9"/></svg>
<div class="t" style="left:458.40px;top:391.63px;font-size:16.5px;line-height:16.5px;color:#a9a9a9;transform:scaleX(0.945);transform-origin:0 0;">プリセット</div>
<div class="t" style="left:541.60px;top:391.48px;font-size:15.5px;line-height:15.5px;color:#a9a9a9;">:</div>
<div class="a" style="left:555.2px;top:387.2px;width:376px;height:23.6px;background:#000;border:1px solid #353535;border-radius:4.5px"></div>
<div class="t" style="left:566.40px;top:392.95px;font-size:16.6px;line-height:16.6px;color:#cfcfcf;transform:scaleX(0.9872);transform-origin:0 0;">YouTube</div>
<svg class="a" style="left:907px;top:393.6px;" width="14" height="10" viewBox="0 0 14 10"><path d="M1.3 1.6l5.6 5.5 5.6-5.5" fill="none" stroke="#dedede" stroke-width="1.95"/></svg>
<svg class="a" style="left:959px;top:390px;" width="18" height="18" viewBox="0 0 18 18"><rect x="1" y="1.2" width="5.2" height="3.7" fill="#bdbdbd"/><path d="M6 3.1H8.6V9.6H12.6" fill="none" stroke="#bdbdbd" stroke-width="1.1"/><rect x="12.4" y="2.4" width="4.1" height="3.6" fill="#bdbdbd"/><rect x="12.4" y="7.5" width="4.1" height="3.6" fill="#bdbdbd"/><rect x="12.4" y="12.5" width="4.1" height="3.6" fill="#bdbdbd"/></svg>
<svg class="a" style="left:992px;top:391px;" width="17" height="15" viewBox="0 0 17 15"><rect x="0.8" y="1" width="15.2" height="2" fill="#9b9b9b"/><rect x="0.8" y="4" width="15.2" height="10" fill="#b9b9b9"/><path d="M5 5.6l6.8 6.8M11.8 5.6L5 12.4" stroke="#171717" stroke-width="1.25"/></svg>
<div class="a" style="left:410px;top:416.8px;width:612.6px;height:1.2px;background:#131313;"></div>
<div class="t" style="left:423.20px;top:430.23px;font-size:15.2px;line-height:15.2px;color:#e2e2e2;">レベルメーター</div>
<svg class="a" style="left:424px;top:452px;" width="108" height="5" viewBox="0 0 108 5"><rect x="1" y="1.6" width="105.2" height="1.6" fill="#d6d6d6"/></svg>
<div class="t" style="left:557.00px;top:430.70px;font-size:15px;line-height:15px;color:#c3c3c3;">設定</div>
<div class="t" style="left:430.00px;top:480.70px;font-size:15px;line-height:15px;color:#ececec;font-weight:500;">短期</div>
<div class="t" style="left:565.00px;top:480.70px;font-size:15px;line-height:15px;color:#ececec;font-weight:500;">統合</div>
<div class="t" style="left:697.00px;top:480.70px;font-size:15px;line-height:15px;color:#ececec;font-weight:500;transform:scaleX(1.025);transform-origin:0 0;">ラウドネス範囲</div>
<div class="t" style="left:823.40px;top:480.70px;font-size:15px;line-height:15px;color:#ececec;font-weight:500;transform:scaleX(1.045);transform-origin:0 0;">トゥルーピーク</div>
<div class="t" style="left:429.80px;top:503.14px;font-size:27px;line-height:27px;color:#d4d4d4;font-weight:bold;transform:scaleX(1.1667);transform-origin:0 0;">-32.2</div>
<div class="t" style="left:506.80px;top:515.93px;font-size:15.2px;line-height:15.2px;color:#b4b4b4;transform:scaleX(0.9780);transform-origin:0 0;">LUFS</div>
<div class="t" style="left:564.80px;top:503.14px;font-size:27px;line-height:27px;color:#d4d4d4;font-weight:bold;transform:scaleX(1.1439);transform-origin:0 0;">-32.3</div>
<div class="t" style="left:640.80px;top:515.93px;font-size:15.2px;line-height:15.2px;color:#b4b4b4;transform:scaleX(0.9728);transform-origin:0 0;">LUFS</div>
<div class="t" style="left:698.40px;top:503.14px;font-size:27px;line-height:27px;color:#ababab;font-weight:bold;transform:scaleX(1.1616);transform-origin:0 0;">6.5</div>
<div class="t" style="left:775.60px;top:515.93px;font-size:15.2px;line-height:15.2px;color:#b4b4b4;transform:scaleX(0.9984);transform-origin:0 0;">LU</div>
<div class="t" style="left:826.00px;top:503.14px;font-size:27px;line-height:27px;color:#d4d4d4;font-weight:bold;transform:scaleX(1.1537);transform-origin:0 0;">-12.8</div>
<div class="t" style="left:902.80px;top:515.73px;font-size:15.2px;line-height:15.2px;color:#b4b4b4;transform:scaleX(1.0048);transform-origin:0 0;">dBTP</div>
<svg class="a" style="left:966px;top:478px;" width="21" height="18" viewBox="0 0 21 18"><path d="M5.1 8.3A6.2 6.2 0 1 1 14.7 13.6" fill="none" stroke="#b8b8b8" stroke-width="2.1"/><path d="M1.2 7.4h9.2l-4.6 4.9z" fill="#b8b8b8"/><rect x="2.8" y="14.8" width="15.8" height="1.6" fill="#b8b8b8"/></svg>
<div class="t" style="left:429.40px;top:549.00px;font-size:15px;line-height:15px;color:#b6b6b6;transform:scaleX(1.04);transform-origin:0 0;">入力</div>
<div class="a" style="left:478.6px;top:550.2px;width:446.2px;height:12.5px;background:#000;"></div>
<div class="a" style="left:481.1px;top:551.8px;width:1.9px;height:9.8px;background:#c2b30c;"></div>
<svg class="a" style="left:478px;top:563.7px;" width="440" height="5" viewBox="0 0 440 5"><rect x="2.05" y="0" width="1.5" height="4.3" fill="#8e8e8e"/><rect x="9.37" y="0" width="1.2" height="1.7" fill="#707070"/><rect x="16.53" y="0" width="1.2" height="1.7" fill="#707070"/><rect x="23.70" y="0" width="1.2" height="1.7" fill="#707070"/><rect x="30.87" y="0" width="1.2" height="1.7" fill="#707070"/><rect x="38.03" y="0" width="1.2" height="1.7" fill="#707070"/><rect x="45.05" y="0" width="1.5" height="4.3" fill="#8e8e8e"/><rect x="52.37" y="0" width="1.2" height="1.7" fill="#707070"/><rect x="59.53" y="0" width="1.2" height="1.7" fill="#707070"/><rect x="66.70" y="0" width="1.2" height="1.7" fill="#707070"/><rect x="73.87" y="0" width="1.2" height="1.7" fill="#707070"/><rect x="81.03" y="0" width="1.2" height="1.7" fill="#707070"/><rect x="88.05" y="0" width="1.5" height="4.3" fill="#8e8e8e"/><rect x="95.37" y="0" width="1.2" height="1.7" fill="#707070"/><rect x="102.53" y="0" width="1.2" height="1.7" fill="#707070"/><rect x="109.70" y="0" width="1.2" height="1.7" fill="#707070"/><rect x="116.87" y="0" width="1.2" height="1.7" fill="#707070"/><rect x="124.03" y="0" width="1.2" height="1.7" fill="#707070"/><rect x="131.05" y="0" width="1.5" height="4.3" fill="#8e8e8e"/><rect x="138.37" y="0" width="1.2" height="1.7" fill="#707070"/><rect x="145.53" y="0" width="1.2" height="1.7" fill="#707070"/><rect x="152.70" y="0" width="1.2" height="1.7" fill="#707070"/><rect x="159.87" y="0" width="1.2" height="1.7" fill="#707070"/><rect x="167.03" y="0" width="1.2" height="1.7" fill="#707070"/><rect x="174.05" y="0" width="1.5" height="4.3" fill="#8e8e8e"/><rect x="181.37" y="0" width="1.2" height="1.7" fill="#707070"/><rect x="188.53" y="0" width="1.2" height="1.7" fill="#707070"/><rect x="195.70" y="0" width="1.2" height="1.7" fill="#707070"/><rect x="202.87" y="0" width="1.2" height="1.7" fill="#707070"/><rect x="210.03" y="0" width="1.2" height="1.7" fill="#707070"/><rect x="217.05" y="0" width="1.5" height="4.3" fill="#8e8e8e"/><rect x="224.37" y="0" width="1.2" height="1.7" fill="#707070"/><rect x="231.53" y="0" width="1.2" height="1.7" fill="#707070"/><rect x="238.70" y="0" width="1.2" height="1.7" fill="#707070"/><rect x="245.87" y="0" width="1.2" height="1.7" fill="#707070"/><rect x="253.03" y="0" width="1.2" height="1.7" fill="#707070"/><rect x="260.05" y="0" width="1.5" height="4.3" fill="#8e8e8e"/><rect x="267.37" y="0" width="1.2" height="1.7" fill="#707070"/><rect x="274.53" y="0" width="1.2" height="1.7" fill="#707070"/><rect x="281.70" y="0" width="1.2" height="1.7" fill="#707070"/><rect x="288.87" y="0" width="1.2" height="1.7" fill="#707070"/><rect x="296.03" y="0" width="1.2" height="1.7" fill="#707070"/><rect x="303.05" y="0" width="1.5" height="4.3" fill="#8e8e8e"/><rect x="310.37" y="0" width="1.2" height="1.7" fill="#707070"/><rect x="317.53" y="0" width="1.2" height="1.7" fill="#707070"/><rect x="324.70" y="0" width="1.2" height="1.7" fill="#707070"/><rect x="331.87" y="0" width="1.2" height="1.7" fill="#707070"/><rect x="339.03" y="0" width="1.2" height="1.7" fill="#707070"/><rect x="346.05" y="0" width="1.5" height="4.3" fill="#8e8e8e"/><rect x="353.37" y="0" width="1.2" height="1.7" fill="#707070"/><rect x="360.53" y="0" width="1.2" height="1.7" fill="#707070"/><rect x="367.70" y="0" width="1.2" height="1.7" fill="#707070"/><rect x="374.87" y="0" width="1.2" height="1.7" fill="#707070"/><rect x="382.03" y="0" width="1.2" height="1.7" fill="#707070"/><rect x="389.05" y="0" width="1.5" height="4.3" fill="#8e8e8e"/><rect x="396.37" y="0" width="1.2" height="1.7" fill="#707070"/><rect x="403.53" y="0" width="1.2" height="1.7" fill="#707070"/><rect x="410.70" y="0" width="1.2" height="1.7" fill="#707070"/><rect x="417.87" y="0" width="1.2" height="1.7" fill="#707070"/><rect x="425.03" y="0" width="1.2" height="1.7" fill="#707070"/><rect x="432.05" y="0" width="1.5" height="4.3" fill="#8e8e8e"/></svg>
<div class="t" style="left:479.90px;top:571.20px;font-size:13px;line-height:13px;color:#6f6f6f;transform:scaleX(1.0600);transform-origin:0 0;">-60</div>
<div class="t" style="left:514.84px;top:571.20px;font-size:13px;line-height:13px;color:#6f6f6f;transform:scaleX(1.0600);transform-origin:0 0;">-54</div>
<div class="t" style="left:557.84px;top:571.20px;font-size:13px;line-height:13px;color:#6f6f6f;transform:scaleX(1.0600);transform-origin:0 0;">-48</div>
<div class="t" style="left:600.84px;top:571.20px;font-size:13px;line-height:13px;color:#6f6f6f;transform:scaleX(1.0600);transform-origin:0 0;">-42</div>
<div class="t" style="left:643.84px;top:571.20px;font-size:13px;line-height:13px;color:#6f6f6f;transform:scaleX(1.0600);transform-origin:0 0;">-36</div>
<div class="t" style="left:686.84px;top:571.20px;font-size:13px;line-height:13px;color:#6f6f6f;transform:scaleX(1.0600);transform-origin:0 0;">-30</div>
<div class="t" style="left:729.84px;top:571.20px;font-size:13px;line-height:13px;color:#6f6f6f;transform:scaleX(1.0600);transform-origin:0 0;">-24</div>
<div class="t" style="left:772.84px;top:571.20px;font-size:13px;line-height:13px;color:#6f6f6f;transform:scaleX(1.0600);transform-origin:0 0;">-18</div>
<div class="t" style="left:815.84px;top:571.20px;font-size:13px;line-height:13px;color:#6f6f6f;transform:scaleX(1.0600);transform-origin:0 0;">-12</div>
<div class="t" style="left:862.67px;top:571.20px;font-size:13px;line-height:13px;color:#6f6f6f;transform:scaleX(1.0600);transform-origin:0 0;">-6</div>
<div class="t" style="left:907.97px;top:571.20px;font-size:13px;line-height:13px;color:#6f6f6f;transform:scaleX(1.0600);transform-origin:0 0;">0</div>
<div class="t" style="left:931.80px;top:548.79px;font-size:15.6px;line-height:15.6px;color:#b4b4b4;transform:scaleX(1.0628);transform-origin:0 0;">d…</div>
<div class="t" style="left:429.60px;top:598.80px;font-size:15px;line-height:15px;color:#b6b6b6;transform:scaleX(1.03);transform-origin:0 0;">短期</div>
<div class="a" style="left:478.6px;top:599.3px;width:434.2px;height:12.3px;background:#000;"></div>
<div class="a" style="left:481.2px;top:600.6px;width:127.2px;height:10px;background:#4981e6;"></div>
<div class="a" style="left:608.4px;top:600.6px;width:13.5px;height:10px;background:#41b557;"></div>
<div class="a" style="left:621.7px;top:600.6px;width:2px;height:10px;background:#dfe01e;"></div>
<svg class="a" style="left:478px;top:612.2px;" width="440" height="5" viewBox="0 0 440 5"><rect x="3.15" y="0" width="1.5" height="4.3" fill="#8e8e8e"/><rect x="11.25" y="0" width="1.2" height="1.7" fill="#707070"/><rect x="19.20" y="0" width="1.2" height="1.7" fill="#707070"/><rect x="27.15" y="0" width="1.2" height="1.7" fill="#707070"/><rect x="35.10" y="0" width="1.2" height="1.7" fill="#707070"/><rect x="43.05" y="0" width="1.2" height="1.7" fill="#707070"/><rect x="50.85" y="0" width="1.5" height="4.3" fill="#8e8e8e"/><rect x="58.95" y="0" width="1.2" height="1.7" fill="#707070"/><rect x="66.90" y="0" width="1.2" height="1.7" fill="#707070"/><rect x="74.85" y="0" width="1.2" height="1.7" fill="#707070"/><rect x="82.80" y="0" width="1.2" height="1.7" fill="#707070"/><rect x="90.75" y="0" width="1.2" height="1.7" fill="#707070"/><rect x="98.55" y="0" width="1.5" height="4.3" fill="#8e8e8e"/><rect x="106.65" y="0" width="1.2" height="1.7" fill="#707070"/><rect x="114.60" y="0" width="1.2" height="1.7" fill="#707070"/><rect x="122.55" y="0" width="1.2" height="1.7" fill="#707070"/><rect x="130.50" y="0" width="1.2" height="1.7" fill="#707070"/><rect x="138.45" y="0" width="1.2" height="1.7" fill="#707070"/><rect x="146.25" y="0" width="1.5" height="4.3" fill="#8e8e8e"/><rect x="154.35" y="0" width="1.2" height="1.7" fill="#707070"/><rect x="162.30" y="0" width="1.2" height="1.7" fill="#707070"/><rect x="170.25" y="0" width="1.2" height="1.7" fill="#707070"/><rect x="178.20" y="0" width="1.2" height="1.7" fill="#707070"/><rect x="186.15" y="0" width="1.2" height="1.7" fill="#707070"/><rect x="193.95" y="0" width="1.5" height="4.3" fill="#8e8e8e"/><rect x="202.05" y="0" width="1.2" height="1.7" fill="#707070"/><rect x="210.00" y="0" width="1.2" height="1.7" fill="#707070"/><rect x="217.95" y="0" width="1.2" height="1.7" fill="#707070"/><rect x="225.90" y="0" width="1.2" height="1.7" fill="#707070"/><rect x="233.85" y="0" width="1.2" height="1.7" fill="#707070"/><rect x="241.65" y="0" width="1.5" height="4.3" fill="#8e8e8e"/><rect x="249.75" y="0" width="1.2" height="1.7" fill="#707070"/><rect x="257.70" y="0" width="1.2" height="1.7" fill="#707070"/><rect x="265.65" y="0" width="1.2" height="1.7" fill="#707070"/><rect x="273.60" y="0" width="1.2" height="1.7" fill="#707070"/><rect x="281.55" y="0" width="1.2" height="1.7" fill="#707070"/><rect x="289.35" y="0" width="1.5" height="4.3" fill="#8e8e8e"/><rect x="297.45" y="0" width="1.2" height="1.7" fill="#707070"/><rect x="305.40" y="0" width="1.2" height="1.7" fill="#707070"/><rect x="313.35" y="0" width="1.2" height="1.7" fill="#707070"/><rect x="321.30" y="0" width="1.2" height="1.7" fill="#707070"/><rect x="329.25" y="0" width="1.2" height="1.7" fill="#707070"/><rect x="337.05" y="0" width="1.5" height="4.3" fill="#8e8e8e"/><rect x="345.15" y="0" width="1.2" height="1.7" fill="#707070"/><rect x="353.10" y="0" width="1.2" height="1.7" fill="#707070"/><rect x="361.05" y="0" width="1.2" height="1.7" fill="#707070"/><rect x="369.00" y="0" width="1.2" height="1.7" fill="#707070"/><rect x="376.95" y="0" width="1.2" height="1.7" fill="#707070"/><rect x="384.75" y="0" width="1.5" height="4.3" fill="#8e8e8e"/><rect x="392.85" y="0" width="1.2" height="1.7" fill="#707070"/><rect x="400.80" y="0" width="1.2" height="1.7" fill="#707070"/><rect x="408.75" y="0" width="1.2" height="1.7" fill="#707070"/><rect x="416.70" y="0" width="1.2" height="1.7" fill="#707070"/><rect x="424.65" y="0" width="1.2" height="1.7" fill="#707070"/><rect x="432.45" y="0" width="1.5" height="4.3" fill="#8e8e8e"/></svg>
<div class="t" style="left:479.90px;top:619.70px;font-size:13px;line-height:13px;color:#6f6f6f;transform:scaleX(1.0600);transform-origin:0 0;">-50</div>
<div class="t" style="left:520.64px;top:619.70px;font-size:13px;line-height:13px;color:#6f6f6f;transform:scaleX(1.0600);transform-origin:0 0;">-44</div>
<div class="t" style="left:568.34px;top:619.70px;font-size:13px;line-height:13px;color:#6f6f6f;transform:scaleX(1.0600);transform-origin:0 0;">-38</div>
<div class="t" style="left:616.04px;top:619.70px;font-size:13px;line-height:13px;color:#6f6f6f;transform:scaleX(1.0600);transform-origin:0 0;">-32</div>
<div class="t" style="left:663.74px;top:619.70px;font-size:13px;line-height:13px;color:#6f6f6f;transform:scaleX(1.0600);transform-origin:0 0;">-26</div>
<div class="t" style="left:711.44px;top:619.70px;font-size:13px;line-height:13px;color:#6f6f6f;transform:scaleX(1.0600);transform-origin:0 0;">-20</div>
<div class="t" style="left:759.14px;top:619.70px;font-size:13px;line-height:13px;color:#6f6f6f;transform:scaleX(1.0600);transform-origin:0 0;">-14</div>
<div class="t" style="left:810.67px;top:619.70px;font-size:13px;line-height:13px;color:#6f6f6f;transform:scaleX(1.0600);transform-origin:0 0;">-8</div>
<div class="t" style="left:858.37px;top:619.70px;font-size:13px;line-height:13px;color:#6f6f6f;transform:scaleX(1.0600);transform-origin:0 0;">-2</div>
<div class="t" style="left:908.37px;top:619.70px;font-size:13px;line-height:13px;color:#6f6f6f;transform:scaleX(1.0600);transform-origin:0 0;">4</div>
<div class="t" style="left:931.40px;top:598.09px;font-size:15.6px;line-height:15.6px;color:#b8b8b8;transform:scaleX(0.9579);transform-origin:0 0;">LUFS</div>
<div class="t" style="left:429.60px;top:644.90px;font-size:15px;line-height:15px;color:#b6b6b6;transform:scaleX(1.03);transform-origin:0 0;">統合</div>
<div class="a" style="left:478.6px;top:646.1px;width:434.2px;height:12.3px;background:#000;"></div>
<div class="a" style="left:481.2px;top:647.4px;width:127.2px;height:10px;background:#4981e6;"></div>
<div class="a" style="left:608.4px;top:647.4px;width:13.5px;height:10px;background:#41b557;"></div>
<div class="a" style="left:621.7px;top:647.4px;width:2px;height:10px;background:#dfe01e;"></div>
<svg class="a" style="left:478px;top:659px;" width="440" height="5" viewBox="0 0 440 5"><rect x="3.15" y="0" width="1.5" height="4.3" fill="#8e8e8e"/><rect x="11.25" y="0" width="1.2" height="1.7" fill="#707070"/><rect x="19.20" y="0" width="1.2" height="1.7" fill="#707070"/><rect x="27.15" y="0" width="1.2" height="1.7" fill="#707070"/><rect x="35.10" y="0" width="1.2" height="1.7" fill="#707070"/><rect x="43.05" y="0" width="1.2" height="1.7" fill="#707070"/><rect x="50.85" y="0" width="1.5" height="4.3" fill="#8e8e8e"/><rect x="58.95" y="0" width="1.2" height="1.7" fill="#707070"/><rect x="66.90" y="0" width="1.2" height="1.7" fill="#707070"/><rect x="74.85" y="0" width="1.2" height="1.7" fill="#707070"/><rect x="82.80" y="0" width="1.2" height="1.7" fill="#707070"/><rect x="90.75" y="0" width="1.2" height="1.7" fill="#707070"/><rect x="98.55" y="0" width="1.5" height="4.3" fill="#8e8e8e"/><rect x="106.65" y="0" width="1.2" height="1.7" fill="#707070"/><rect x="114.60" y="0" width="1.2" height="1.7" fill="#707070"/><rect x="122.55" y="0" width="1.2" height="1.7" fill="#707070"/><rect x="130.50" y="0" width="1.2" height="1.7" fill="#707070"/><rect x="138.45" y="0" width="1.2" height="1.7" fill="#707070"/><rect x="146.25" y="0" width="1.5" height="4.3" fill="#8e8e8e"/><rect x="154.35" y="0" width="1.2" height="1.7" fill="#707070"/><rect x="162.30" y="0" width="1.2" height="1.7" fill="#707070"/><rect x="170.25" y="0" width="1.2" height="1.7" fill="#707070"/><rect x="178.20" y="0" width="1.2" height="1.7" fill="#707070"/><rect x="186.15" y="0" width="1.2" height="1.7" fill="#707070"/><rect x="193.95" y="0" width="1.5" height="4.3" fill="#8e8e8e"/><rect x="202.05" y="0" width="1.2" height="1.7" fill="#707070"/><rect x="210.00" y="0" width="1.2" height="1.7" fill="#707070"/><rect x="217.95" y="0" width="1.2" height="1.7" fill="#707070"/><rect x="225.90" y="0" width="1.2" height="1.7" fill="#707070"/><rect x="233.85" y="0" width="1.2" height="1.7" fill="#707070"/><rect x="241.65" y="0" width="1.5" height="4.3" fill="#8e8e8e"/><rect x="249.75" y="0" width="1.2" height="1.7" fill="#707070"/><rect x="257.70" y="0" width="1.2" height="1.7" fill="#707070"/><rect x="265.65" y="0" width="1.2" height="1.7" fill="#707070"/><rect x="273.60" y="0" width="1.2" height="1.7" fill="#707070"/><rect x="281.55" y="0" width="1.2" height="1.7" fill="#707070"/><rect x="289.35" y="0" width="1.5" height="4.3" fill="#8e8e8e"/><rect x="297.45" y="0" width="1.2" height="1.7" fill="#707070"/><rect x="305.40" y="0" width="1.2" height="1.7" fill="#707070"/><rect x="313.35" y="0" width="1.2" height="1.7" fill="#707070"/><rect x="321.30" y="0" width="1.2" height="1.7" fill="#707070"/><rect x="329.25" y="0" width="1.2" height="1.7" fill="#707070"/><rect x="337.05" y="0" width="1.5" height="4.3" fill="#8e8e8e"/><rect x="345.15" y="0" width="1.2" height="1.7" fill="#707070"/><rect x="353.10" y="0" width="1.2" height="1.7" fill="#707070"/><rect x="361.05" y="0" width="1.2" height="1.7" fill="#707070"/><rect x="369.00" y="0" width="1.2" height="1.7" fill="#707070"/><rect x="376.95" y="0" width="1.2" height="1.7" fill="#707070"/><rect x="384.75" y="0" width="1.5" height="4.3" fill="#8e8e8e"/><rect x="392.85" y="0" width="1.2" height="1.7" fill="#707070"/><rect x="400.80" y="0" width="1.2" height="1.7" fill="#707070"/><rect x="408.75" y="0" width="1.2" height="1.7" fill="#707070"/><rect x="416.70" y="0" width="1.2" height="1.7" fill="#707070"/><rect x="424.65" y="0" width="1.2" height="1.7" fill="#707070"/><rect x="432.45" y="0" width="1.5" height="4.3" fill="#8e8e8e"/></svg>
<div class="t" style="left:479.90px;top:666.50px;font-size:13px;line-height:13px;color:#6f6f6f;transform:scaleX(1.0600);transform-origin:0 0;">-50</div>
<div class="t" style="left:520.64px;top:666.50px;font-size:13px;line-height:13px;color:#6f6f6f;transform:scaleX(1.0600);transform-origin:0 0;">-44</div>
<div class="t" style="left:568.34px;top:666.50px;font-size:13px;line-height:13px;color:#6f6f6f;transform:scaleX(1.0600);transform-origin:0 0;">-38</div>
<div class="t" style="left:616.04px;top:666.50px;font-size:13px;line-height:13px;color:#6f6f6f;transform:scaleX(1.0600);transform-origin:0 0;">-32</div>
<div class="t" style="left:663.74px;top:666.50px;font-size:13px;line-height:13px;color:#6f6f6f;transform:scaleX(1.0600);transform-origin:0 0;">-26</div>
<div class="t" style="left:711.44px;top:666.50px;font-size:13px;line-height:13px;color:#6f6f6f;transform:scaleX(1.0600);transform-origin:0 0;">-20</div>
<div class="t" style="left:759.14px;top:666.50px;font-size:13px;line-height:13px;color:#6f6f6f;transform:scaleX(1.0600);transform-origin:0 0;">-14</div>
<div class="t" style="left:810.67px;top:666.50px;font-size:13px;line-height:13px;color:#6f6f6f;transform:scaleX(1.0600);transform-origin:0 0;">-8</div>
<div class="t" style="left:858.37px;top:666.50px;font-size:13px;line-height:13px;color:#6f6f6f;transform:scaleX(1.0600);transform-origin:0 0;">-2</div>
<div class="t" style="left:908.37px;top:666.50px;font-size:13px;line-height:13px;color:#6f6f6f;transform:scaleX(1.0600);transform-origin:0 0;">4</div>
<div class="t" style="left:931.40px;top:644.89px;font-size:15.6px;line-height:15.6px;color:#b8b8b8;transform:scaleX(0.9579);transform-origin:0 0;">LUFS</div>
<div class="t" style="left:429.00px;top:694.00px;font-size:15px;line-height:15px;color:#b6b6b6;transform:scaleX(1.05);transform-origin:0 0;">瞬間</div>
<div class="a" style="left:478.6px;top:695px;width:434.2px;height:12.3px;background:#000;"></div>
<div class="a" style="left:481.2px;top:696.3px;width:127.2px;height:10px;background:#4981e6;"></div>
<div class="a" style="left:608.4px;top:696.3px;width:16.2px;height:10px;background:#41b557;"></div>
<div class="a" style="left:624.4px;top:696.3px;width:2px;height:10px;background:#dfe01e;"></div>
<svg class="a" style="left:478px;top:707.9px;" width="440" height="5" viewBox="0 0 440 5"><rect x="3.15" y="0" width="1.5" height="4.3" fill="#8e8e8e"/><rect x="11.25" y="0" width="1.2" height="1.7" fill="#707070"/><rect x="19.20" y="0" width="1.2" height="1.7" fill="#707070"/><rect x="27.15" y="0" width="1.2" height="1.7" fill="#707070"/><rect x="35.10" y="0" width="1.2" height="1.7" fill="#707070"/><rect x="43.05" y="0" width="1.2" height="1.7" fill="#707070"/><rect x="50.85" y="0" width="1.5" height="4.3" fill="#8e8e8e"/><rect x="58.95" y="0" width="1.2" height="1.7" fill="#707070"/><rect x="66.90" y="0" width="1.2" height="1.7" fill="#707070"/><rect x="74.85" y="0" width="1.2" height="1.7" fill="#707070"/><rect x="82.80" y="0" width="1.2" height="1.7" fill="#707070"/><rect x="90.75" y="0" width="1.2" height="1.7" fill="#707070"/><rect x="98.55" y="0" width="1.5" height="4.3" fill="#8e8e8e"/><rect x="106.65" y="0" width="1.2" height="1.7" fill="#707070"/><rect x="114.60" y="0" width="1.2" height="1.7" fill="#707070"/><rect x="122.55" y="0" width="1.2" height="1.7" fill="#707070"/><rect x="130.50" y="0" width="1.2" height="1.7" fill="#707070"/><rect x="138.45" y="0" width="1.2" height="1.7" fill="#707070"/><rect x="146.25" y="0" width="1.5" height="4.3" fill="#8e8e8e"/><rect x="154.35" y="0" width="1.2" height="1.7" fill="#707070"/><rect x="162.30" y="0" width="1.2" height="1.7" fill="#707070"/><rect x="170.25" y="0" width="1.2" height="1.7" fill="#707070"/><rect x="178.20" y="0" width="1.2" height="1.7" fill="#707070"/><rect x="186.15" y="0" width="1.2" height="1.7" fill="#707070"/><rect x="193.95" y="0" width="1.5" height="4.3" fill="#8e8e8e"/><rect x="202.05" y="0" width="1.2" height="1.7" fill="#707070"/><rect x="210.00" y="0" width="1.2" height="1.7" fill="#707070"/><rect x="217.95" y="0" width="1.2" height="1.7" fill="#707070"/><rect x="225.90" y="0" width="1.2" height="1.7" fill="#707070"/><rect x="233.85" y="0" width="1.2" height="1.7" fill="#707070"/><rect x="241.65" y="0" width="1.5" height="4.3" fill="#8e8e8e"/><rect x="249.75" y="0" width="1.2" height="1.7" fill="#707070"/><rect x="257.70" y="0" width="1.2" height="1.7" fill="#707070"/><rect x="265.65" y="0" width="1.2" height="1.7" fill="#707070"/><rect x="273.60" y="0" width="1.2" height="1.7" fill="#707070"/><rect x="281.55" y="0" width="1.2" height="1.7" fill="#707070"/><rect x="289.35" y="0" width="1.5" height="4.3" fill="#8e8e8e"/><rect x="297.45" y="0" width="1.2" height="1.7" fill="#707070"/><rect x="305.40" y="0" width="1.2" height="1.7" fill="#707070"/><rect x="313.35" y="0" width="1.2" height="1.7" fill="#707070"/><rect x="321.30" y="0" width="1.2" height="1.7" fill="#707070"/><rect x="329.25" y="0" width="1.2" height="1.7" fill="#707070"/><rect x="337.05" y="0" width="1.5" height="4.3" fill="#8e8e8e"/><rect x="345.15" y="0" width="1.2" height="1.7" fill="#707070"/><rect x="353.10" y="0" width="1.2" height="1.7" fill="#707070"/><rect x="361.05" y="0" width="1.2" height="1.7" fill="#707070"/><rect x="369.00" y="0" width="1.2" height="1.7" fill="#707070"/><rect x="376.95" y="0" width="1.2" height="1.7" fill="#707070"/><rect x="384.75" y="0" width="1.5" height="4.3" fill="#8e8e8e"/><rect x="392.85" y="0" width="1.2" height="1.7" fill="#707070"/><rect x="400.80" y="0" width="1.2" height="1.7" fill="#707070"/><rect x="408.75" y="0" width="1.2" height="1.7" fill="#707070"/><rect x="416.70" y="0" width="1.2" height="1.7" fill="#707070"/><rect x="424.65" y="0" width="1.2" height="1.7" fill="#707070"/><rect x="432.45" y="0" width="1.5" height="4.3" fill="#8e8e8e"/></svg>
<div class="t" style="left:479.90px;top:715.40px;font-size:13px;line-height:13px;color:#6f6f6f;transform:scaleX(1.0600);transform-origin:0 0;">-50</div>
<div class="t" style="left:520.64px;top:715.40px;font-size:13px;line-height:13px;color:#6f6f6f;transform:scaleX(1.0600);transform-origin:0 0;">-44</div>
<div class="t" style="left:568.34px;top:715.40px;font-size:13px;line-height:13px;color:#6f6f6f;transform:scaleX(1.0600);transform-origin:0 0;">-38</div>
<div class="t" style="left:616.04px;top:715.40px;font-size:13px;line-height:13px;color:#6f6f6f;transform:scaleX(1.0600);transform-origin:0 0;">-32</div>
<div class="t" style="left:663.74px;top:715.40px;font-size:13px;line-height:13px;color:#6f6f6f;transform:scaleX(1.0600);transform-origin:0 0;">-26</div>
<div class="t" style="left:711.44px;top:715.40px;font-size:13px;line-height:13px;color:#6f6f6f;transform:scaleX(1.0600);transform-origin:0 0;">-20</div>
<div class="t" style="left:759.14px;top:715.40px;font-size:13px;line-height:13px;color:#6f6f6f;transform:scaleX(1.0600);transform-origin:0 0;">-14</div>
<div class="t" style="left:810.67px;top:715.40px;font-size:13px;line-height:13px;color:#6f6f6f;transform:scaleX(1.0600);transform-origin:0 0;">-8</div>
<div class="t" style="left:858.37px;top:715.40px;font-size:13px;line-height:13px;color:#6f6f6f;transform:scaleX(1.0600);transform-origin:0 0;">-2</div>
<div class="t" style="left:908.37px;top:715.40px;font-size:13px;line-height:13px;color:#6f6f6f;transform:scaleX(1.0600);transform-origin:0 0;">4</div>
<div class="t" style="left:931.40px;top:693.79px;font-size:15.6px;line-height:15.6px;color:#b8b8b8;transform:scaleX(0.9579);transform-origin:0 0;">LUFS</div>
<div class="t" style="left:421.60px;top:771.00px;font-size:15px;line-height:15px;color:#b2b2b2;transform:scaleX(1.03);transform-origin:0 0;">入力</div>
<div class="t" style="left:454.40px;top:769.97px;font-size:14.8px;line-height:14.8px;color:#b2b2b2;transform:scaleX(1.1541);transform-origin:0 0;">: L, R |</div>
<div class="t" style="left:510.40px;top:770.80px;font-size:15px;line-height:15px;color:#b2b2b2;">出力</div>
<div class="t" style="left:542.40px;top:769.97px;font-size:14.8px;line-height:14.8px;color:#b2b2b2;transform:scaleX(1.1367);transform-origin:0 0;">: L, R</div>
<div class="a" style="left:12.9px;top:757.3px;width:30.4px;height:30.5px;background:#0d6fe6;border-radius:5px"></div>
<svg class="a" style="left:12px;top:757px;" width="32" height="31" viewBox="0 0 32 31"><path d="M10 5.6L25.2 19.9 16.6 20.9 10 27z" fill="#fff"/></svg>
<svg class="a" style="left:55px;top:762px;" width="28" height="25" viewBox="0 0 28 25"><rect x="2.4" y="3.4" width="12.4" height="13" fill="none" stroke="#b2b2b2" stroke-width="1.6" stroke-dasharray="3.4 2.2" stroke-dashoffset="1.2"/><path d="M9.6 8.3h8.2V5.6l6.4 4.5-6.4 4.5v-2.7H9.6z" fill="#b2b2b2"/><path d="M26.4 18.6v4.9h-4.9z" fill="#9d9d9d"/></svg>
<svg class="a" style="left:126.8px;top:749.4px;" width="8" height="8" viewBox="0 0 8 8"><path d="M1 1l5.8 5.8M6.8 1L1 6.8" stroke="#9a9a9a" stroke-width="1.2"/></svg>
<div class="a" style="left:146.4px;top:744.8px;width:11.7px;height:12px;background:#444900;"></div>
<div class="t" style="left:172.40px;top:744.63px;font-size:15.8px;line-height:15.8px;color:#c9c9c9;transform:scaleX(1.0412);transform-origin:0 0;">end_2025</div>
<svg class="a" style="left:258.6px;top:747.5px;" width="12" height="11" viewBox="0 0 12 11"><path d="M0.3 1.5h10.2M0.3 5.3h10.2M0.3 9.1h10.2" stroke="#8f8f8f" stroke-width="1.9"/></svg>
<div class="t" style="left:136.20px;top:776.90px;font-size:17.6px;line-height:17.6px;color:#4494ee;font-weight:bold;transform:scaleX(0.9990);transform-origin:0 0;">00:00:12:27</div>
<div class="a" style="left:716.4px;top:719px;width:307.6px;height:80px;background:rgba(255,255,255,.068)"></div>
<svg class="a" role="img" aria-label="うしのめも帳" style="left:716px;top:719px" width="308" height="80" viewBox="0 0 308 80"><title>うしのめも帳</title><g font-family="'Liberation Sans','Noto Sans CJK JP',sans-serif" font-weight="700" text-anchor="middle"><text x="44.8" y="56" font-size="42" fill="#717171">う</text><text x="83.7" y="56" font-size="42" fill="#717171">し</text><text x="114.1" y="47.8" font-size="18" fill="#6c2323">の</text><text x="157.8" y="56" font-size="42" fill="#717171">め</text><text x="203.2" y="56" font-size="42" fill="#717171">も</text><text x="250.5" y="56" font-size="42" fill="#717171">帳</text></g></svg>
</div>
</body></html>
